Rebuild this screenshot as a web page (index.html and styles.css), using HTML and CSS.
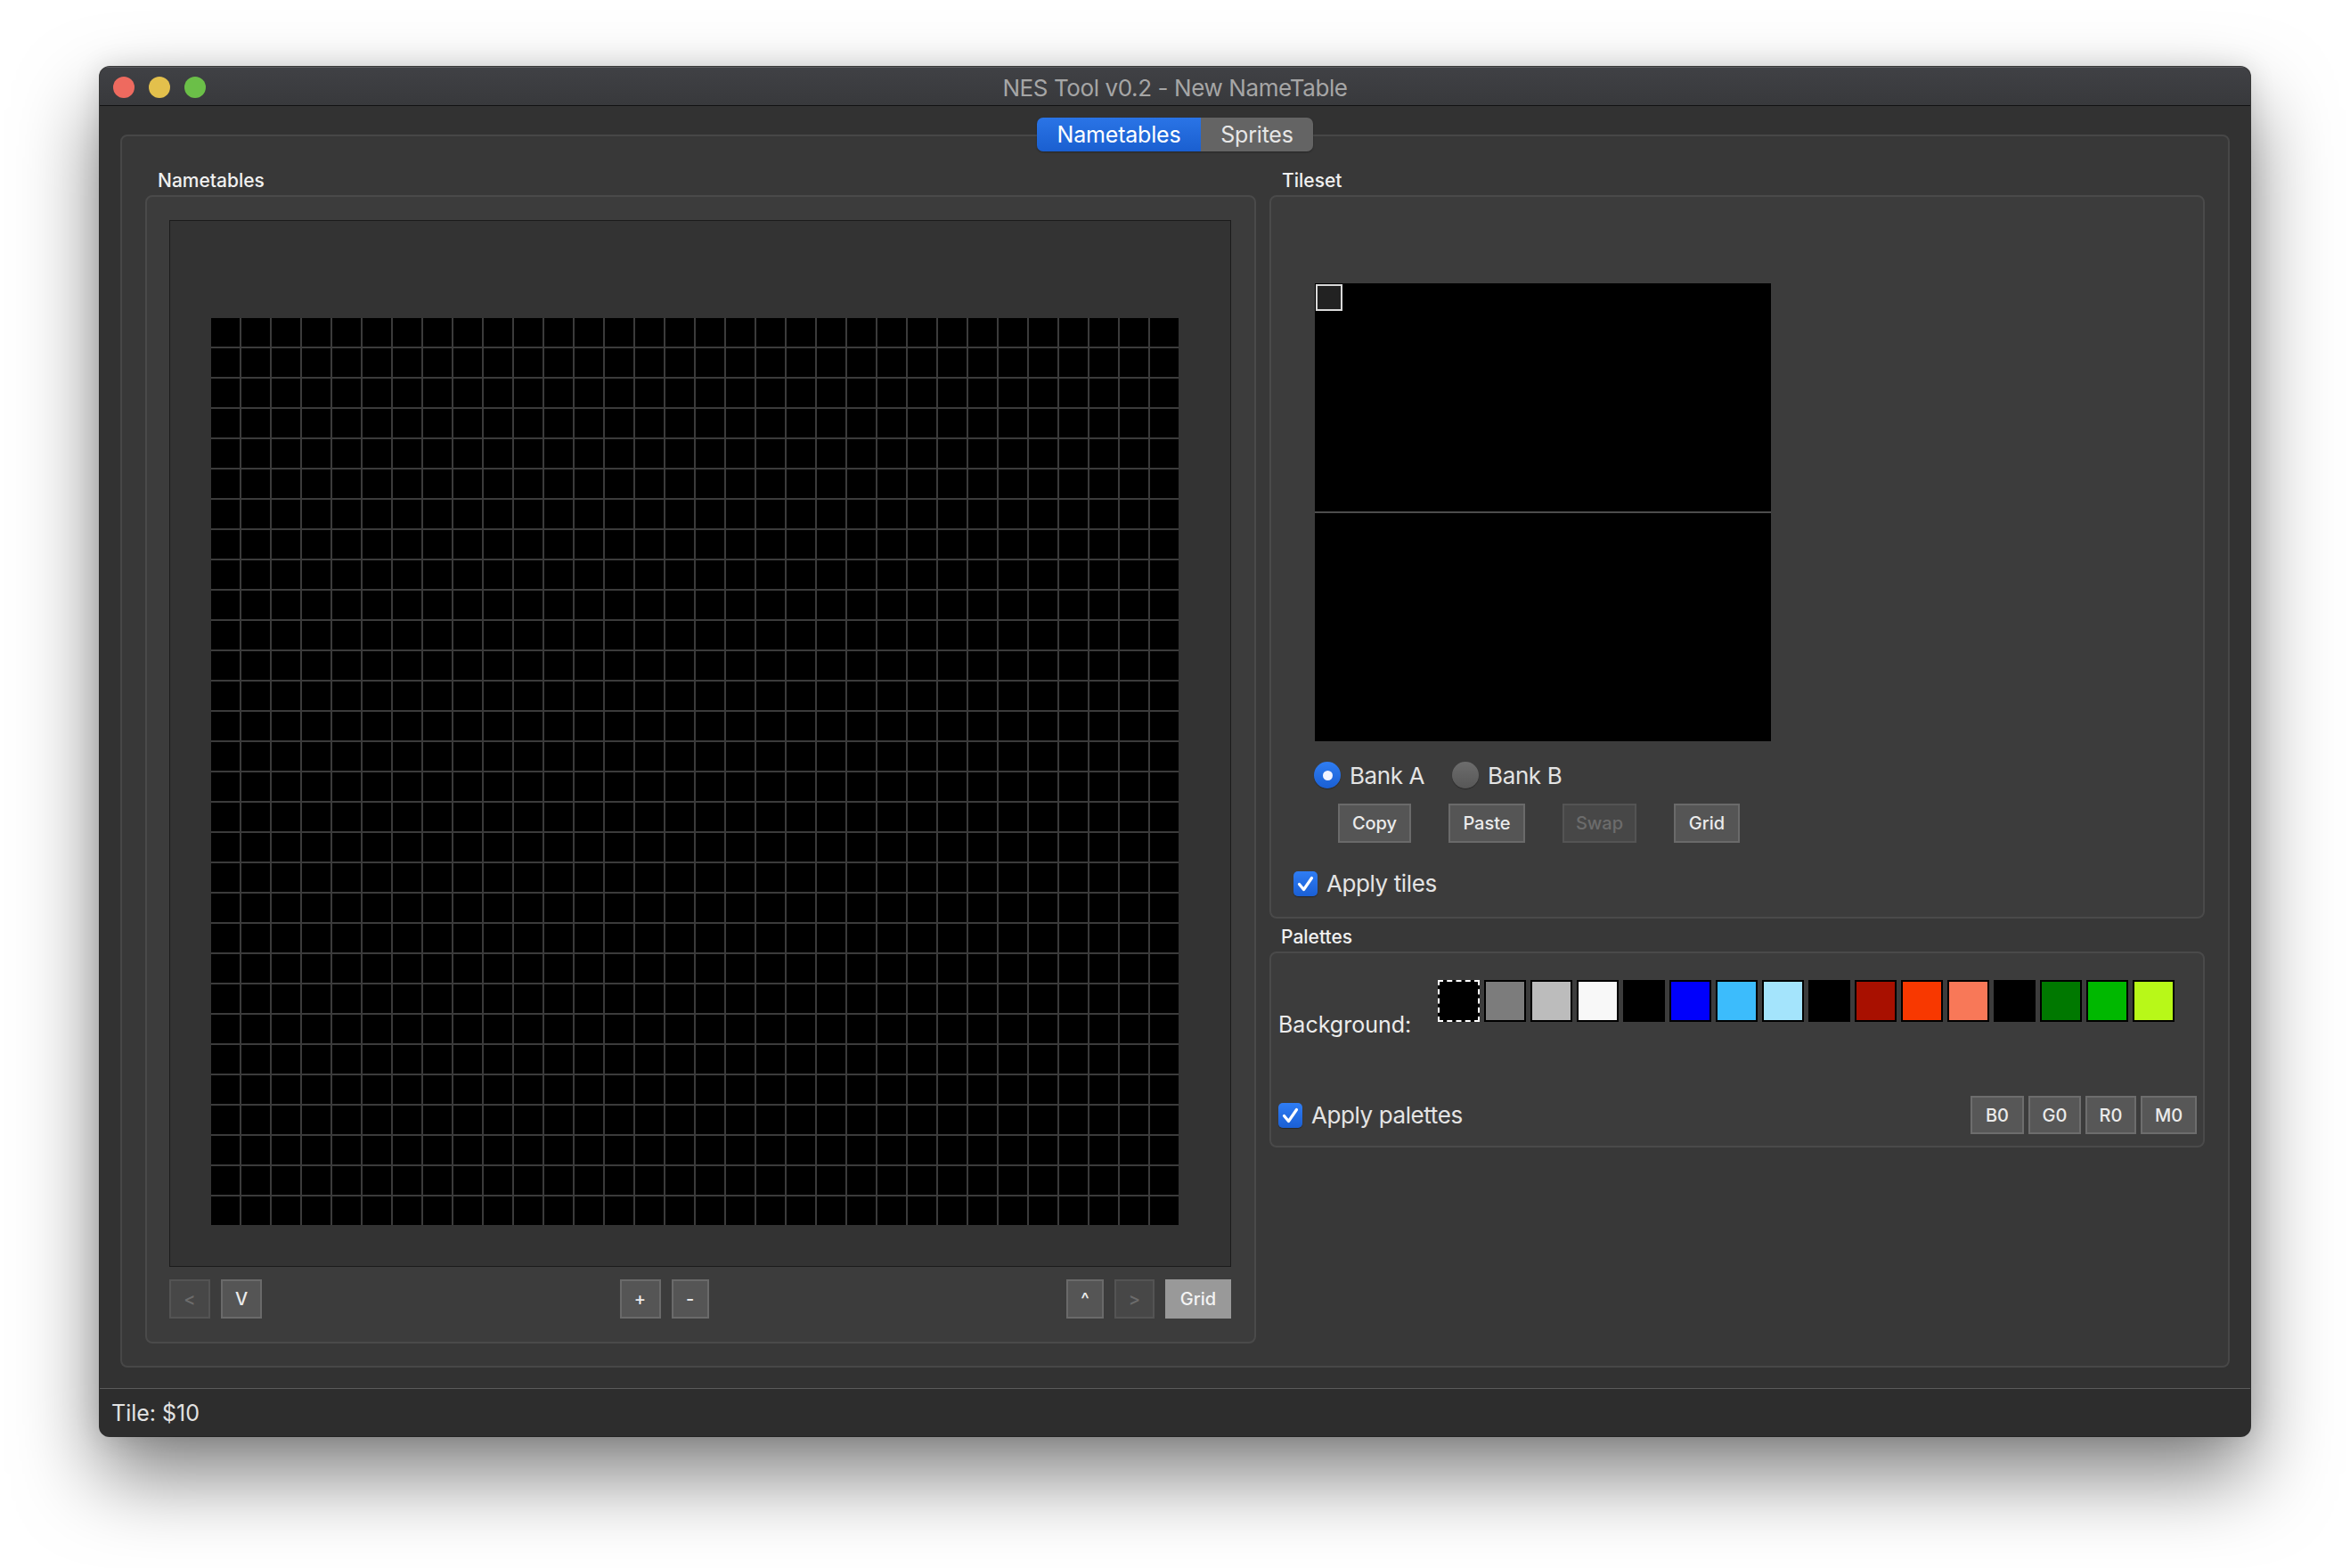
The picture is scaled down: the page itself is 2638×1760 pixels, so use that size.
FILE: index.html
```html
<!DOCTYPE html>
<html>
<head>
<meta charset="utf-8">
<title>NES Tool v0.2 - New NameTable</title>
<link rel="stylesheet" href="styles.css">
</head>
<body>
<div class="window">
  <div class="titlebar">
    <div class="lights">
      <span class="light red"></span>
      <span class="light yellow"></span>
      <span class="light green"></span>
    </div>
    <div class="title">NES Tool v0.2 - New NameTable</div>
    <div></div>
  </div>
  <div class="main">
    <div class="tabs">
      <div class="tab active">Nametables</div>
      <div class="tab sprites">Sprites</div>
    </div>
    <div class="pane">
      <div class="col col-left">
        <div class="glabel">Nametables</div>
        <div class="group nt">
          <div class="canvas"><div class="grid"></div></div>
          <div class="ntbtns">
            <div class="bgrp">
              <button class="btn dis w46">&lt;</button>
              <button class="btn w46">V</button>
            </div>
            <div class="bgrp">
              <button class="btn w46">+</button>
              <button class="btn w42">-</button>
            </div>
            <div class="bgrp">
              <button class="btn w42">^</button>
              <button class="btn dis w45">&gt;</button>
              <button class="btn on w74">Grid</button>
            </div>
          </div>
        </div>
      </div>
      <div class="col col-right">
        <div class="glabel">Tileset</div>
        <div class="group ts">
          <div class="tiles">
            <div class="bank"><div class="sel"></div></div>
            <div class="bank bank-b"></div>
          </div>
          <div class="radios">
            <span class="radio on"><span class="dot"></span></span>
            <span class="rlabel">Bank A</span>
            <span class="radio off second"></span>
            <span class="rlabel">Bank B</span>
          </div>
          <div class="tsbtns">
            <button class="btn w82">Copy</button>
            <button class="btn w86">Paste</button>
            <button class="btn dis w83">Swap</button>
            <button class="btn w74">Grid</button>
          </div>
          <div class="check">
            <span class="cbox"><svg viewBox="0 0 27 28" width="27" height="28"><polyline points="6.5,14.5 11.5,20.5 20.5,7.5" fill="none" stroke="#ffffff" stroke-width="3.2" stroke-linecap="round" stroke-linejoin="round"/></svg></span>
            <span class="clabel">Apply tiles</span>
          </div>
        </div>
        <div class="glabel pl">Palettes</div>
        <div class="group pal">
          <div class="prow">
            <div class="bglabel">Background:</div>
            <div class="swatches">
              <span class="sw selsw" style="background:#000000"></span>
              <span class="sw" style="background:#7c7c7c"></span>
              <span class="sw" style="background:#bcbcbc"></span>
              <span class="sw" style="background:#f8f8f8"></span>
              <span class="sw" style="background:#000000"></span>
              <span class="sw" style="background:#0000fc"></span>
              <span class="sw" style="background:#3cbcfc"></span>
              <span class="sw" style="background:#a4e4fc"></span>
              <span class="sw" style="background:#000000"></span>
              <span class="sw" style="background:#a81000"></span>
              <span class="sw" style="background:#f83800"></span>
              <span class="sw" style="background:#f87858"></span>
              <span class="sw" style="background:#000000"></span>
              <span class="sw" style="background:#007800"></span>
              <span class="sw" style="background:#00b800"></span>
              <span class="sw" style="background:#b8f818"></span>
            </div>
          </div>
          <div class="arow">
            <div class="check">
              <span class="cbox"><svg viewBox="0 0 27 28" width="27" height="28"><polyline points="6.5,14.5 11.5,20.5 20.5,7.5" fill="none" stroke="#ffffff" stroke-width="3.2" stroke-linecap="round" stroke-linejoin="round"/></svg></span>
              <span class="clabel">Apply palettes</span>
            </div>
            <div class="pbtns">
              <button class="btn pb w60">B0</button>
              <button class="btn pb w59">G0</button>
              <button class="btn pb w57">R0</button>
              <button class="btn pb w63">M0</button>
            </div>
          </div>
        </div>
      </div>
    </div>
  </div>
  <div class="status">Tile: $10</div>
</div>
</body>
</html>
```
FILE: styles.css
```css
html, body {
  margin: 0;
  padding: 0;
}
body {
  width: 2638px;
  height: 1760px;
  overflow: hidden;
  background: #ffffff;
  font-family: "Inter", "Roboto", "Liberation Sans", sans-serif;
}
.window {
  margin: 75px 0 0 112px;
  width: 2414px;
  height: 1537px;
  border-radius: 11px;
  overflow: hidden;
  display: flex;
  flex-direction: column;
  background: #323232;
  box-shadow: 0 0 0 1px rgba(0,0,0,0.75), 0 44px 90px rgba(0,0,0,0.5), 0 0 30px rgba(0,0,0,0.12);
}
.titlebar {
  height: 44px;
  box-sizing: border-box;
  padding-top: 3px;
  border-bottom: 1px solid #121212;
  background: linear-gradient(#404145, #38393c);
  box-shadow: inset 0 1px 0 #5c5c60;
  display: grid;
  grid-template-columns: 1fr auto 1fr;
  align-items: center;
}
.lights {
  display: flex;
  gap: 16px;
  padding-left: 15px;
}
.light {
  width: 24px;
  height: 24px;
  border-radius: 50%;
}
.red { background: #ee6a5f; }
.yellow { background: #e3c04c; }
.green { background: #6bbf48; }
.title {
  color: #a6a6a6;
  font-size: 26px;
  line-height: 31px;
  letter-spacing: -0.4px;
}
.main {
  flex: 1;
  display: flex;
  flex-direction: column;
  padding: 13px 23px 23px 23px;
  min-height: 0;
}
.tabs {
  align-self: center;
  display: flex;
  height: 38px;
  position: relative;
  z-index: 1;
  border-radius: 7px;
  overflow: hidden;
  box-shadow: 0 1px 2px rgba(0,0,0,0.35);
}
.tab {
  font-size: 25px;
  line-height: 38px;
  text-align: center;
  color: #e6e6e6;
  letter-spacing: -0.2px;
}
.tab.active {
  width: 184px;
  color: #ffffff;
  background: linear-gradient(#2a74e6, #1a5fd0);
}
.tab.sprites {
  width: 126px;
  background: #646464;
}
.pane {
  flex: 1;
  margin-top: -19px;
  border: 2px solid #474747;
  border-radius: 8px;
  background: #383838;
  display: flex;
  gap: 15px;
  padding: 37px 26px 25px 26px;
  min-height: 0;
}
.col {
  display: flex;
  flex-direction: column;
}
.col-left { width: 1247px; }
.col-right { flex: 1; }
.glabel {
  font-size: 21px;
  font-weight: 500;
  line-height: 26px;
  height: 26px;
  padding-left: 14px;
  margin-bottom: 3px;
  color: #f0f0f0;
}
.glabel.pl {
  margin-top: 8px;
  padding-left: 13px;
}
.group {
  box-sizing: border-box;
  border: 2px solid #4a4a4a;
  border-radius: 8px;
  background: #3c3c3c;
}
.group.nt {
  flex: 1;
  display: flex;
  flex-direction: column;
  padding: 26px 26px 26px 25px;
  min-height: 0;
}
.canvas {
  flex: 1;
  border: 1px solid #1b1b1b;
  background: #333333;
  min-height: 0;
}
.grid {
  margin: 109px 0 0 46px;
  width: 1086px;
  height: 1018px;
  background-color: #000000;
  background-image:
    linear-gradient(to right, transparent 32px, #3b3b3b 32px),
    linear-gradient(to bottom, transparent 32px, #3b3b3b 32px);
  background-size: 34px 34px;
}
.ntbtns {
  margin-top: 14px;
  height: 44px;
  display: flex;
  justify-content: space-between;
}
.bgrp {
  display: flex;
  gap: 12px;
}
.btn {
  box-sizing: border-box;
  height: 44px;
  padding: 0;
  margin: 0;
  border: 2px solid #6a6a6a;
  background: #555555;
  color: #ebebeb;
  font-family: "Inter", "Roboto", "Liberation Sans", sans-serif;
  font-size: 20px;
  font-weight: 500;
  text-align: center;
}
.btn.dis {
  background: #474747;
  border-color: #545454;
  color: #6c6c6c;
}
.btn.on {
  background: #999999;
  border: none;
  color: #f4f4f4;
}
.w42 { width: 42px; }
.w45 { width: 45px; }
.w46 { width: 46px; }
.w57 { width: 57px; }
.w59 { width: 59px; }
.w60 { width: 60px; }
.w63 { width: 63px; }
.w74 { width: 74px; }
.w82 { width: 82px; }
.w83 { width: 83px; }
.w86 { width: 86px; }
.group.ts {
  height: 812px;
  padding: 97px 0 25px 25px;
  display: flex;
  flex-direction: column;
}
.tiles {
  margin-left: 24px;
  width: 512px;
  display: flex;
  flex-direction: column;
}
.bank {
  height: 256px;
  background: #000000;
  padding: 1px;
  box-sizing: border-box;
}
.bank-b {
  height: 258px;
  border-top: 2px solid #4c4c4c;
}
.sel {
  width: 30px;
  height: 30px;
  box-sizing: border-box;
  border: 2px solid #d9d9d9;
  background: #222222;
}
.radios {
  margin: 23px 0 0 23px;
  height: 30px;
  display: flex;
  align-items: center;
}
.radio {
  width: 30px;
  height: 30px;
  border-radius: 50%;
  box-sizing: border-box;
  display: flex;
  align-items: center;
  justify-content: center;
  box-shadow: 0 1px 1px rgba(0,0,0,0.35);
}
.radio.on {
  background: linear-gradient(#2f7df2, #1a5fd3);
}
.radio.off {
  background: linear-gradient(#6d6d6d, #575757);
}
.radio.second {
  margin-left: 31px;
}
.dot {
  width: 11px;
  height: 11px;
  border-radius: 50%;
  background: #f2f4ff;
}
.rlabel {
  margin-left: 10px;
  font-size: 26px;
  letter-spacing: -0.4px;
  color: #e4e4e4;
}
.tsbtns {
  margin: 17px 0 0 50px;
  display: flex;
  gap: 42px;
}
.check {
  display: flex;
  align-items: center;
}
.ts .check {
  margin-top: 30px;
}
.cbox {
  width: 27px;
  height: 28px;
  border-radius: 5px;
  background: linear-gradient(#2f7df4, #1a5fd4);
  box-shadow: 0 1px 1px rgba(0,0,0,0.35);
  display: block;
}
.cbox svg {
  display: block;
}
.clabel {
  margin-left: 10px;
  font-size: 26px;
  letter-spacing: -0.4px;
  color: #e4e4e4;
}
.group.pal {
  height: 220px;
  padding: 30px 7px 13px 8px;
  display: flex;
  flex-direction: column;
}
.prow {
  display: flex;
  align-items: flex-start;
}
.bglabel {
  width: 179px;
  margin-top: 35px;
  font-size: 25px;
  line-height: 30px;
  color: #ececec;
}
.swatches {
  display: flex;
  gap: 5px;
}
.sw {
  width: 47px;
  height: 47px;
  box-sizing: border-box;
  border: 2px solid #000000;
  display: block;
}
.sw.selsw {
  border: 2px dashed #ffffff;
}
.arow {
  margin-top: auto;
  height: 43px;
  display: flex;
  align-items: center;
  justify-content: space-between;
}
.pbtns {
  display: flex;
  gap: 5px;
}
.btn.pb {
  height: 43px;
  background: #575757;
  border-color: #6d6d6d;
}
.status {
  height: 54px;
  box-sizing: border-box;
  border-top: 1px solid #5a5a5a;
  background: #2d2d2d;
  padding-left: 13px;
  display: flex;
  align-items: center;
  font-size: 25px;
  line-height: 30px;
  color: #e2e2e2;
}
```
